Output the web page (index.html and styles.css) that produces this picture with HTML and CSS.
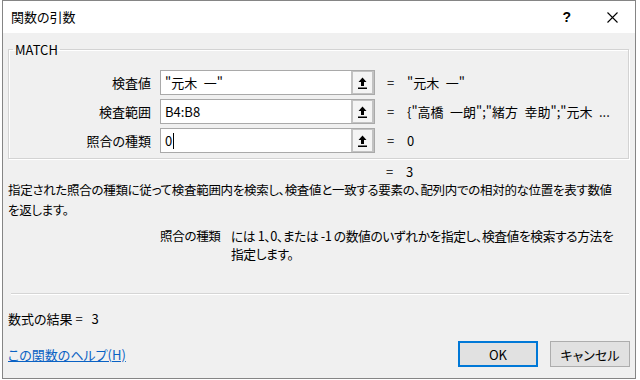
FILE: index.html
```html
<!DOCTYPE html>
<html lang="ja">
<head>
<meta charset="utf-8">
<title>関数の引数</title>
<link rel="stylesheet" href="styles.css">
</head>
<body>
<div class="dialog">
  <div class="titlebar">
    <span class="title">関数の引数</span>
    <span class="help">?</span>
    <svg class="close" width="11" height="11" viewBox="0 0 11 11"><path d="M0.5 0.5 L10.5 10.5 M10.5 0.5 L0.5 10.5" stroke="#000" stroke-width="1.1" fill="none"/></svg>
  </div>
  <div class="content">
    <fieldset class="group">
      <legend>MATCH</legend>
      <div class="args">
        <div class="lbl">検査値</div>
        <div class="field"><span class="ftext">"元木&ensp;一"</span><span class="refbtn"><svg width="9" height="12" viewBox="0 0 9 12"><path d="M4.5 0.5 L8.5 5 L6 5 L6 9 L3 9 L3 5 L0.5 5 Z" fill="#000"/><rect x="0" y="10.5" width="9" height="1.5" fill="#000"/></svg></span></div>
        <div class="val"><span class="eq">=</span>"元木&ensp;一"</div>

        <div class="lbl">検査範囲</div>
        <div class="field"><span class="ftext">B4:B8</span><span class="refbtn"><svg width="9" height="12" viewBox="0 0 9 12"><path d="M4.5 0.5 L8.5 5 L6 5 L6 9 L3 9 L3 5 L0.5 5 Z" fill="#000"/><rect x="0" y="10.5" width="9" height="1.5" fill="#000"/></svg></span></div>
        <div class="val"><span class="eq">=</span>{"高橋&ensp;一朗";"緒方&ensp;幸助";"元木&ensp;...</div>

        <div class="lbl">照合の種類</div>
        <div class="field"><span class="ftext">0<span class="caret"></span></span><span class="refbtn"><svg width="9" height="12" viewBox="0 0 9 12"><path d="M4.5 0.5 L8.5 5 L6 5 L6 9 L3 9 L3 5 L0.5 5 Z" fill="#000"/><rect x="0" y="10.5" width="9" height="1.5" fill="#000"/></svg></span></div>
        <div class="val"><span class="eq">=</span>0</div>
      </div>
    </fieldset>
    <div class="result"><span class="eq">=</span>3</div>
    <p class="desc">指定された照合の種類に従って検査範囲内を検索し、検査値と一致する要素の、配列内での相対的な位置を表す数値<br>を返します。</p>
    <div class="argdesc">
      <span class="argname">照合の種類</span>
      <span class="argtext">には 1、0、または -1 の数値のいずれかを指定し、検査値を検索する方法を<br>指定します。</span>
    </div>
    <div class="sep"></div>
    <div class="formula">数式の結果 =&nbsp;&nbsp;&nbsp;3</div>
    <div class="footer">
      <a class="helplink" href="#">この関数のヘルプ(H)</a>
      <div class="buttons">
        <button class="btn ok">OK</button>
        <button class="btn">キャンセル</button>
      </div>
    </div>
  </div>
</div>
</body>
</html>
```

FILE: styles.css
```css
* { box-sizing: border-box; }
html, body { margin: 0; padding: 0; background: #ffffff; }
body {
  font-family: "Noto Sans CJK JP", "Noto Sans", sans-serif;
  font-size: 13px;
  color: #000;
  font-feature-settings: "palt";
}
.dialog {
  margin-left: 2px;
  width: 634px;
  height: 379px;
  border: 1px solid #858585;
  background: #f0f0f0;
  display: flex;
  flex-direction: column;
}
.titlebar {
  height: 32px;
  background: #fff;
  display: flex;
  align-items: center;
  padding-left: 8px;
  padding-right: 17px;
  flex: none;
}
.title { flex: 1; line-height: 16px; }
.help { margin-right: 36px; font-family: "Liberation Sans", sans-serif; font-size: 14px; font-weight: bold; }
.close { display: block; }
.content {
  padding: 0 6px 0 5px;
  display: flex;
  flex-direction: column;
  flex: 1;
}
.group {
  margin: 8px 0 0 0;
  padding: 12px 0 5px 0;
  border: 1px solid #d3d3d3;
  box-shadow: inset 1px 1px 0 #fff, 1px 1px 0 #fff;
  min-width: 0;
}
.group legend {
  margin-left: 4px;
  padding: 0 2px;
  line-height: 17px;
}
.args {
  display: grid;
  grid-template-columns: 151px 215px 1fr;
  grid-auto-rows: 25px;
  row-gap: 4px;
  align-items: center;
}
.lbl { text-align: right; padding-right: 9px; white-space: nowrap; }
.field {
  height: 25px;
  border: 1px solid #a9a9a9;
  background: #fff;
  display: flex;
}
.ftext {
  flex: 1;
  padding-left: 4px;
  line-height: 23px;
  white-space: pre;
  display: flex;
  align-items: center;
}
.caret { display: inline-block; width: 1px; height: 16px; background: #000; margin-left: 1px; }
.refbtn {
  width: 23px;
  border: 2px solid #c2c2c2;
  border-top-width: 1px;
  border-bottom-width: 1px;
  background: #f4f4f4;
  display: flex;
  align-items: center;
  justify-content: center;
}
.refbtn svg { display: block; }
.val { padding-left: 12px; white-space: pre; overflow: hidden; }
.eq { display: inline-block; width: 20px; }
.result { margin-top: 5px; padding-left: 378px; line-height: 16px; }
.desc {
  margin: 0;
  line-height: 20px;
  white-space: nowrap;
  font-size: 12.5px;
  letter-spacing: -0.3px;
}
.argdesc { margin-top: 7px; display: flex; line-height: 18px; }
.argname { width: 223px; padding-left: 152px; flex: none; white-space: nowrap; font-size: 12.5px; letter-spacing: -0.3px; }
.argtext { white-space: nowrap; letter-spacing: -0.45px; font-size: 12.8px; }
.sep {
  margin-top: 30px;
  margin-left: 3px;
  border-top: 1px solid #d5d5d5;
  border-bottom: 1px solid #fff;
}
.formula { margin-top: 15px; line-height: 17px; white-space: pre; }
.footer {
  margin-top: 14px;
  display: flex;
  align-items: center;
  justify-content: space-between;
}
.helplink { color: #0a62c4; text-decoration: underline; line-height: 17px; }
.buttons { display: flex; gap: 12px; margin-right: -1px; }
.btn {
  width: 80px;
  height: 26px;
  background: #e1e1e1;
  border: 1px solid #adadad;
  font-family: inherit;
  font-size: 13px;
  color: #000;
  padding: 0;
  font-feature-settings: "palt";
}
.btn.ok { border: 2px solid #0078d7; width: 80px; }
```
